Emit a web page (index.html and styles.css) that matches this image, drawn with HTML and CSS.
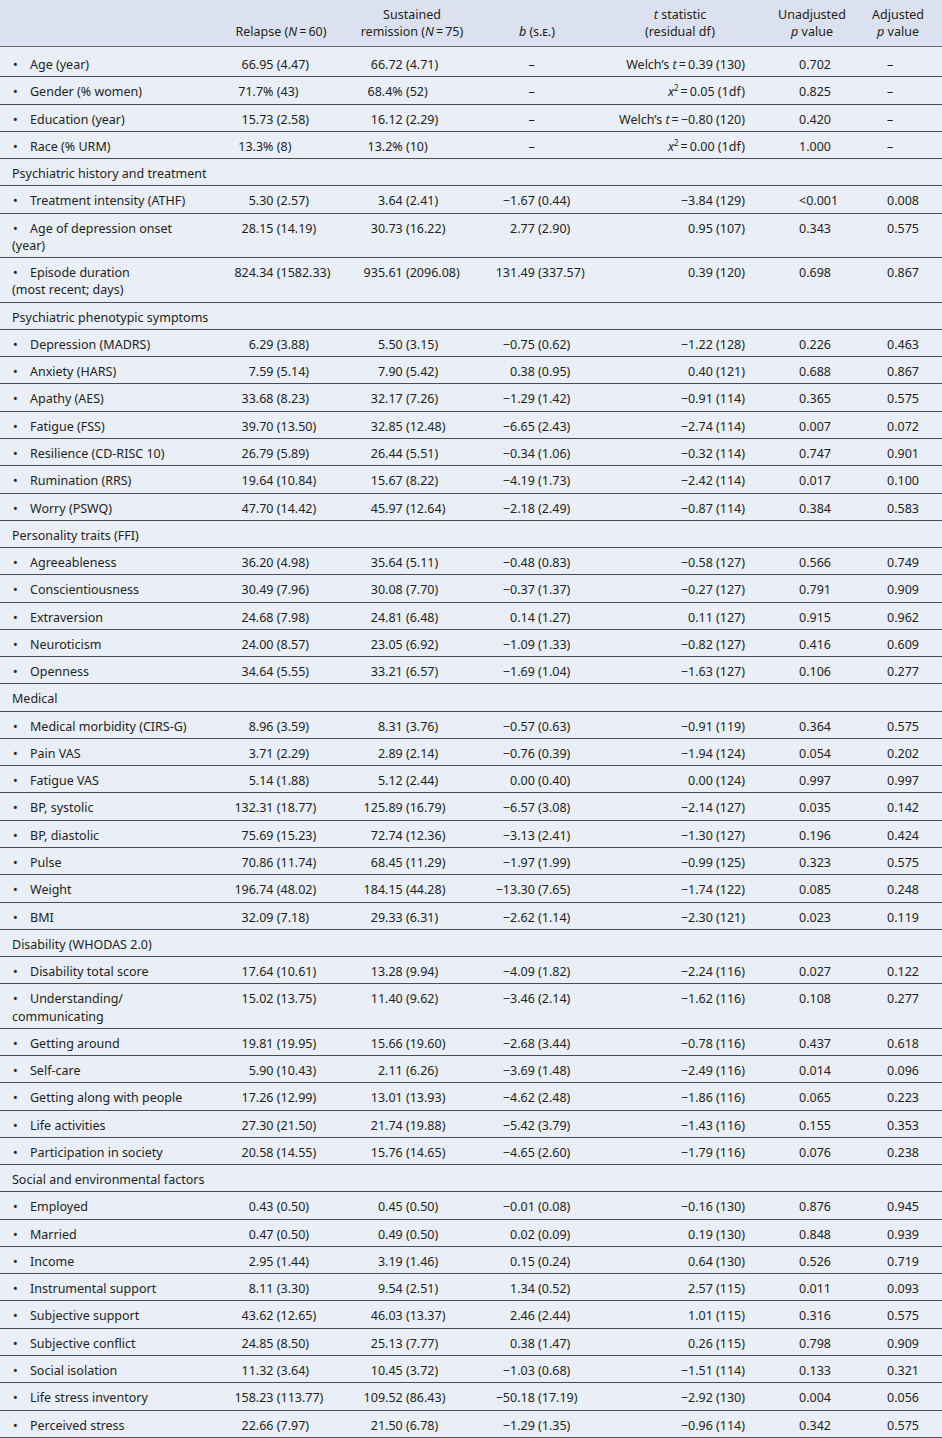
FILE: index.html
```html
<!DOCTYPE html>
<html lang="en">
<head>
<meta charset="utf-8">
<title>Table</title>
<link rel="stylesheet" href="styles.css">
</head>
<body>
<table class="tbl">
<colgroup>
<col class="w1"><col class="w2"><col class="w3"><col class="w4"><col class="w5"><col class="w6"><col class="w7">
</colgroup>
<thead>
<tr>
<th class="h1"></th>
<th class="h2">Relapse (<i>N</i>&thinsp;=&thinsp;60)</th>
<th class="h3">Sustained<br>remission (<i>N</i>&thinsp;=&thinsp;75)</th>
<th class="h4"><i>b</i> (<span class="sc">s.e.</span>)</th>
<th class="h5"><i>t</i> statistic<br>(residual df)</th>
<th class="h6">Unadjusted<br><i>p</i> value</th>
<th class="h7">Adjusted<br><i>p</i> value</th>
</tr>
</thead>
<tbody>
<tr class="first"><td class="lab"><span class="b">•</span>Age (year)</td><td class="c2"><span class="l">66.95</span> (4.47)</td><td class="c3"><span class="l">66.72</span> (4.71)</td><td class="c4"><span class="l">–</span></td><td class="c5">Welch’s <i>t</i>&thinsp;=&thinsp;0.39 (130)</td><td class="c6">0.702</td><td class="c7">–</td></tr>
<tr><td class="lab"><span class="b">•</span>Gender (% women)</td><td class="c2"><span class="l">71.7%</span> (43)</td><td class="c3"><span class="l">68.4%</span> (52)</td><td class="c4"><span class="l">–</span></td><td class="c5"><i>x</i><sup>2</sup>&thinsp;=&thinsp;0.05 (1df)</td><td class="c6">0.825</td><td class="c7">–</td></tr>
<tr><td class="lab"><span class="b">•</span>Education (year)</td><td class="c2"><span class="l">15.73</span> (2.58)</td><td class="c3"><span class="l">16.12</span> (2.29)</td><td class="c4"><span class="l">–</span></td><td class="c5">Welch’s <i>t</i>&thinsp;=&thinsp;−0.80 (120)</td><td class="c6">0.420</td><td class="c7">–</td></tr>
<tr><td class="lab"><span class="b">•</span>Race (% URM)</td><td class="c2"><span class="l">13.3%</span> (8)</td><td class="c3"><span class="l">13.2%</span> (10)</td><td class="c4"><span class="l">–</span></td><td class="c5"><i>x</i><sup>2</sup>&thinsp;=&thinsp;0.00 (1df)</td><td class="c6">1.000</td><td class="c7">–</td></tr>

<tr><td class="sec" colspan="7">Psychiatric history and treatment</td></tr>
<tr><td class="lab"><span class="b">•</span>Treatment intensity (ATHF)</td><td class="c2"><span class="l">5.30</span> (2.57)</td><td class="c3"><span class="l">3.64</span> (2.41)</td><td class="c4"><span class="l">−1.67</span> (0.44)</td><td class="c5">−3.84 (129)</td><td class="c6">&lt;0.001</td><td class="c7">0.008</td></tr>
<tr><td class="lab"><span class="b">•</span>Age of depression onset<br>(year)</td><td class="c2"><span class="l">28.15</span> (14.19)</td><td class="c3"><span class="l">30.73</span> (16.22)</td><td class="c4"><span class="l">2.77</span> (2.90)</td><td class="c5">0.95 (107)</td><td class="c6">0.343</td><td class="c7">0.575</td></tr>
<tr><td class="lab"><span class="b">•</span>Episode duration<br>(most recent; days)</td><td class="c2"><span class="l">824.34</span> (1582.33)</td><td class="c3"><span class="l">935.61</span> (2096.08)</td><td class="c4"><span class="l">131.49</span> (337.57)</td><td class="c5">0.39 (120)</td><td class="c6">0.698</td><td class="c7">0.867</td></tr>

<tr><td class="sec" colspan="7">Psychiatric phenotypic symptoms</td></tr>
<tr><td class="lab"><span class="b">•</span>Depression (MADRS)</td><td class="c2"><span class="l">6.29</span> (3.88)</td><td class="c3"><span class="l">5.50</span> (3.15)</td><td class="c4"><span class="l">−0.75</span> (0.62)</td><td class="c5">−1.22 (128)</td><td class="c6">0.226</td><td class="c7">0.463</td></tr>
<tr><td class="lab"><span class="b">•</span>Anxiety (HARS)</td><td class="c2"><span class="l">7.59</span> (5.14)</td><td class="c3"><span class="l">7.90</span> (5.42)</td><td class="c4"><span class="l">0.38</span> (0.95)</td><td class="c5">0.40 (121)</td><td class="c6">0.688</td><td class="c7">0.867</td></tr>
<tr><td class="lab"><span class="b">•</span>Apathy (AES)</td><td class="c2"><span class="l">33.68</span> (8.23)</td><td class="c3"><span class="l">32.17</span> (7.26)</td><td class="c4"><span class="l">−1.29</span> (1.42)</td><td class="c5">−0.91 (114)</td><td class="c6">0.365</td><td class="c7">0.575</td></tr>
<tr><td class="lab"><span class="b">•</span>Fatigue (FSS)</td><td class="c2"><span class="l">39.70</span> (13.50)</td><td class="c3"><span class="l">32.85</span> (12.48)</td><td class="c4"><span class="l">−6.65</span> (2.43)</td><td class="c5">−2.74 (114)</td><td class="c6">0.007</td><td class="c7">0.072</td></tr>
<tr><td class="lab"><span class="b">•</span>Resilience (CD-RISC 10)</td><td class="c2"><span class="l">26.79</span> (5.89)</td><td class="c3"><span class="l">26.44</span> (5.51)</td><td class="c4"><span class="l">−0.34</span> (1.06)</td><td class="c5">−0.32 (114)</td><td class="c6">0.747</td><td class="c7">0.901</td></tr>
<tr><td class="lab"><span class="b">•</span>Rumination (RRS)</td><td class="c2"><span class="l">19.64</span> (10.84)</td><td class="c3"><span class="l">15.67</span> (8.22)</td><td class="c4"><span class="l">−4.19</span> (1.73)</td><td class="c5">−2.42 (114)</td><td class="c6">0.017</td><td class="c7">0.100</td></tr>
<tr><td class="lab"><span class="b">•</span>Worry (PSWQ)</td><td class="c2"><span class="l">47.70</span> (14.42)</td><td class="c3"><span class="l">45.97</span> (12.64)</td><td class="c4"><span class="l">−2.18</span> (2.49)</td><td class="c5">−0.87 (114)</td><td class="c6">0.384</td><td class="c7">0.583</td></tr>

<tr><td class="sec" colspan="7">Personality traits (FFI)</td></tr>
<tr><td class="lab"><span class="b">•</span>Agreeableness</td><td class="c2"><span class="l">36.20</span> (4.98)</td><td class="c3"><span class="l">35.64</span> (5.11)</td><td class="c4"><span class="l">−0.48</span> (0.83)</td><td class="c5">−0.58 (127)</td><td class="c6">0.566</td><td class="c7">0.749</td></tr>
<tr><td class="lab"><span class="b">•</span>Conscientiousness</td><td class="c2"><span class="l">30.49</span> (7.96)</td><td class="c3"><span class="l">30.08</span> (7.70)</td><td class="c4"><span class="l">−0.37</span> (1.37)</td><td class="c5">−0.27 (127)</td><td class="c6">0.791</td><td class="c7">0.909</td></tr>
<tr><td class="lab"><span class="b">•</span>Extraversion</td><td class="c2"><span class="l">24.68</span> (7.98)</td><td class="c3"><span class="l">24.81</span> (6.48)</td><td class="c4"><span class="l">0.14</span> (1.27)</td><td class="c5">0.11 (127)</td><td class="c6">0.915</td><td class="c7">0.962</td></tr>
<tr><td class="lab"><span class="b">•</span>Neuroticism</td><td class="c2"><span class="l">24.00</span> (8.57)</td><td class="c3"><span class="l">23.05</span> (6.92)</td><td class="c4"><span class="l">−1.09</span> (1.33)</td><td class="c5">−0.82 (127)</td><td class="c6">0.416</td><td class="c7">0.609</td></tr>
<tr><td class="lab"><span class="b">•</span>Openness</td><td class="c2"><span class="l">34.64</span> (5.55)</td><td class="c3"><span class="l">33.21</span> (6.57)</td><td class="c4"><span class="l">−1.69</span> (1.04)</td><td class="c5">−1.63 (127)</td><td class="c6">0.106</td><td class="c7">0.277</td></tr>

<tr><td class="sec" colspan="7">Medical</td></tr>
<tr><td class="lab"><span class="b">•</span>Medical morbidity (CIRS-G)</td><td class="c2"><span class="l">8.96</span> (3.59)</td><td class="c3"><span class="l">8.31</span> (3.76)</td><td class="c4"><span class="l">−0.57</span> (0.63)</td><td class="c5">−0.91 (119)</td><td class="c6">0.364</td><td class="c7">0.575</td></tr>
<tr><td class="lab"><span class="b">•</span>Pain VAS</td><td class="c2"><span class="l">3.71</span> (2.29)</td><td class="c3"><span class="l">2.89</span> (2.14)</td><td class="c4"><span class="l">−0.76</span> (0.39)</td><td class="c5">−1.94 (124)</td><td class="c6">0.054</td><td class="c7">0.202</td></tr>
<tr><td class="lab"><span class="b">•</span>Fatigue VAS</td><td class="c2"><span class="l">5.14</span> (1.88)</td><td class="c3"><span class="l">5.12</span> (2.44)</td><td class="c4"><span class="l">0.00</span> (0.40)</td><td class="c5">0.00 (124)</td><td class="c6">0.997</td><td class="c7">0.997</td></tr>
<tr><td class="lab"><span class="b">•</span>BP, systolic</td><td class="c2"><span class="l">132.31</span> (18.77)</td><td class="c3"><span class="l">125.89</span> (16.79)</td><td class="c4"><span class="l">−6.57</span> (3.08)</td><td class="c5">−2.14 (127)</td><td class="c6">0.035</td><td class="c7">0.142</td></tr>
<tr><td class="lab"><span class="b">•</span>BP, diastolic</td><td class="c2"><span class="l">75.69</span> (15.23)</td><td class="c3"><span class="l">72.74</span> (12.36)</td><td class="c4"><span class="l">−3.13</span> (2.41)</td><td class="c5">−1.30 (127)</td><td class="c6">0.196</td><td class="c7">0.424</td></tr>
<tr><td class="lab"><span class="b">•</span>Pulse</td><td class="c2"><span class="l">70.86</span> (11.74)</td><td class="c3"><span class="l">68.45</span> (11.29)</td><td class="c4"><span class="l">−1.97</span> (1.99)</td><td class="c5">−0.99 (125)</td><td class="c6">0.323</td><td class="c7">0.575</td></tr>
<tr><td class="lab"><span class="b">•</span>Weight</td><td class="c2"><span class="l">196.74</span> (48.02)</td><td class="c3"><span class="l">184.15</span> (44.28)</td><td class="c4"><span class="l">−13.30</span> (7.65)</td><td class="c5">−1.74 (122)</td><td class="c6">0.085</td><td class="c7">0.248</td></tr>
<tr><td class="lab"><span class="b">•</span>BMI</td><td class="c2"><span class="l">32.09</span> (7.18)</td><td class="c3"><span class="l">29.33</span> (6.31)</td><td class="c4"><span class="l">−2.62</span> (1.14)</td><td class="c5">−2.30 (121)</td><td class="c6">0.023</td><td class="c7">0.119</td></tr>

<tr><td class="sec" colspan="7">Disability (WHODAS 2.0)</td></tr>
<tr><td class="lab"><span class="b">•</span>Disability total score</td><td class="c2"><span class="l">17.64</span> (10.61)</td><td class="c3"><span class="l">13.28</span> (9.94)</td><td class="c4"><span class="l">−4.09</span> (1.82)</td><td class="c5">−2.24 (116)</td><td class="c6">0.027</td><td class="c7">0.122</td></tr>
<tr><td class="lab"><span class="b">•</span>Understanding/<br>communicating</td><td class="c2"><span class="l">15.02</span> (13.75)</td><td class="c3"><span class="l">11.40</span> (9.62)</td><td class="c4"><span class="l">−3.46</span> (2.14)</td><td class="c5">−1.62 (116)</td><td class="c6">0.108</td><td class="c7">0.277</td></tr>
<tr><td class="lab"><span class="b">•</span>Getting around</td><td class="c2"><span class="l">19.81</span> (19.95)</td><td class="c3"><span class="l">15.66</span> (19.60)</td><td class="c4"><span class="l">−2.68</span> (3.44)</td><td class="c5">−0.78 (116)</td><td class="c6">0.437</td><td class="c7">0.618</td></tr>
<tr><td class="lab"><span class="b">•</span>Self-care</td><td class="c2"><span class="l">5.90</span> (10.43)</td><td class="c3"><span class="l">2.11</span> (6.26)</td><td class="c4"><span class="l">−3.69</span> (1.48)</td><td class="c5">−2.49 (116)</td><td class="c6">0.014</td><td class="c7">0.096</td></tr>
<tr><td class="lab"><span class="b">•</span>Getting along with people</td><td class="c2"><span class="l">17.26</span> (12.99)</td><td class="c3"><span class="l">13.01</span> (13.93)</td><td class="c4"><span class="l">−4.62</span> (2.48)</td><td class="c5">−1.86 (116)</td><td class="c6">0.065</td><td class="c7">0.223</td></tr>
<tr><td class="lab"><span class="b">•</span>Life activities</td><td class="c2"><span class="l">27.30</span> (21.50)</td><td class="c3"><span class="l">21.74</span> (19.88)</td><td class="c4"><span class="l">−5.42</span> (3.79)</td><td class="c5">−1.43 (116)</td><td class="c6">0.155</td><td class="c7">0.353</td></tr>
<tr><td class="lab"><span class="b">•</span>Participation in society</td><td class="c2"><span class="l">20.58</span> (14.55)</td><td class="c3"><span class="l">15.76</span> (14.65)</td><td class="c4"><span class="l">−4.65</span> (2.60)</td><td class="c5">−1.79 (116)</td><td class="c6">0.076</td><td class="c7">0.238</td></tr>

<tr><td class="sec" colspan="7">Social and environmental factors</td></tr>
<tr><td class="lab"><span class="b">•</span>Employed</td><td class="c2"><span class="l">0.43</span> (0.50)</td><td class="c3"><span class="l">0.45</span> (0.50)</td><td class="c4"><span class="l">−0.01</span> (0.08)</td><td class="c5">−0.16 (130)</td><td class="c6">0.876</td><td class="c7">0.945</td></tr>
<tr><td class="lab"><span class="b">•</span>Married</td><td class="c2"><span class="l">0.47</span> (0.50)</td><td class="c3"><span class="l">0.49</span> (0.50)</td><td class="c4"><span class="l">0.02</span> (0.09)</td><td class="c5">0.19 (130)</td><td class="c6">0.848</td><td class="c7">0.939</td></tr>
<tr><td class="lab"><span class="b">•</span>Income</td><td class="c2"><span class="l">2.95</span> (1.44)</td><td class="c3"><span class="l">3.19</span> (1.46)</td><td class="c4"><span class="l">0.15</span> (0.24)</td><td class="c5">0.64 (130)</td><td class="c6">0.526</td><td class="c7">0.719</td></tr>
<tr><td class="lab"><span class="b">•</span>Instrumental support</td><td class="c2"><span class="l">8.11</span> (3.30)</td><td class="c3"><span class="l">9.54</span> (2.51)</td><td class="c4"><span class="l">1.34</span> (0.52)</td><td class="c5">2.57 (115)</td><td class="c6">0.011</td><td class="c7">0.093</td></tr>
<tr><td class="lab"><span class="b">•</span>Subjective support</td><td class="c2"><span class="l">43.62</span> (12.65)</td><td class="c3"><span class="l">46.03</span> (13.37)</td><td class="c4"><span class="l">2.46</span> (2.44)</td><td class="c5">1.01 (115)</td><td class="c6">0.316</td><td class="c7">0.575</td></tr>
<tr><td class="lab"><span class="b">•</span>Subjective conflict</td><td class="c2"><span class="l">24.85</span> (8.50)</td><td class="c3"><span class="l">25.13</span> (7.77)</td><td class="c4"><span class="l">0.38</span> (1.47)</td><td class="c5">0.26 (115)</td><td class="c6">0.798</td><td class="c7">0.909</td></tr>
<tr><td class="lab"><span class="b">•</span>Social isolation</td><td class="c2"><span class="l">11.32</span> (3.64)</td><td class="c3"><span class="l">10.45</span> (3.72)</td><td class="c4"><span class="l">−1.03</span> (0.68)</td><td class="c5">−1.51 (114)</td><td class="c6">0.133</td><td class="c7">0.321</td></tr>
<tr><td class="lab"><span class="b">•</span>Life stress inventory</td><td class="c2"><span class="l">158.23</span> (113.77)</td><td class="c3"><span class="l">109.52</span> (86.43)</td><td class="c4"><span class="l">−50.18</span> (17.19)</td><td class="c5">−2.92 (130)</td><td class="c6">0.004</td><td class="c7">0.056</td></tr>
<tr><td class="lab"><span class="b">•</span>Perceived stress</td><td class="c2"><span class="l">22.66</span> (7.97)</td><td class="c3"><span class="l">21.50</span> (6.78)</td><td class="c4"><span class="l">−1.29</span> (1.35)</td><td class="c5">−0.96 (114)</td><td class="c6">0.342</td><td class="c7">0.575</td></tr>
</tbody>
</table>
</body>
</html>
```

FILE: styles.css
```css
html, body {
  margin: 0;
  padding: 0;
  background: #e9eef7;
}
body {
  font-family: "Noto Sans", "Open Sans", sans-serif;
  font-size: 12.5px;
  color: #231f20;
}
.tbl {
  width: 942px;
  border-collapse: collapse;
  table-layout: fixed;
}
.w1 { width: 228px; }
.w2 { width: 106px; }
.w3 { width: 156px; }
.w4 { width: 94px; }
.w5 { width: 186px; }
.w6 { width: 84px; }
.w7 { width: 88px; }

thead th {
  background: #dbe1ee;
  font-weight: normal;
  text-align: center;
  vertical-align: bottom;
  line-height: 17px;
  padding: 6px 0 6px;
  border-bottom: 1px solid #6b6b6b;
  white-space: nowrap;
}
.h5 { padding-left: 6px; }
.sc { font-variant: small-caps; }
sup { font-size: 8px; line-height: 0; vertical-align: 5px; }

tbody td {
  line-height: 17.27px;
  padding: 6px 0 3px;
  vertical-align: top;
  border-bottom: 1px solid #4d4d4d;
  white-space: nowrap;
}
tbody tr.first td { padding-top: 9px; }
.lab { padding-left: 12px; }
.sec { padding-left: 12px; }
.b {
  display: inline-block;
  width: 18px;
  padding-left: 1px;
  box-sizing: border-box;
}
.l {
  display: inline-block;
  text-align: right;
}
.c2 .l { width: 45.5px; }
.c3 .l { width: 68.7px; }
.c4 .l { width: 44.8px; }
.c5 { text-align: right; padding-right: 25px; }
.c6 { padding-left: 29px; }
.c7 { padding-left: 33px; }
```
